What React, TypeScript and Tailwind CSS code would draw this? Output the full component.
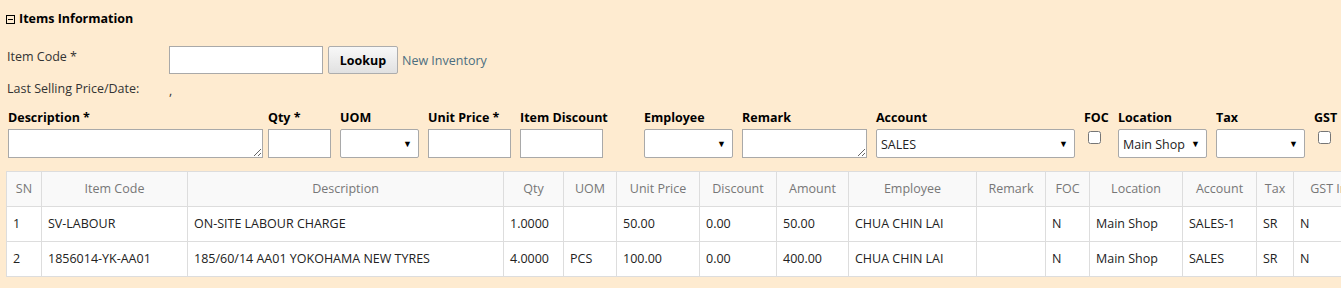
import React from "react";

const font = { fontFamily: '"Open Sans", "Noto Sans", sans-serif' };

function FakeSelect({ value = "", className = "" }: { value?: string; className?: string }) {
  return (
    <div
      className={`h-[29px] flex items-center justify-between bg-white border border-[#a9a9a9] rounded-[2px] pl-[4px] pr-[6px] text-[12.5px] text-[#222] ${className}`}
    >
      <span className="whitespace-nowrap pt-[4px]">{value}</span>
      <span className="text-[9px] text-black">▼</span>
    </div>
  );
}

function TextBox({ className = "" }: { className?: string }) {
  return <div className={`h-[29px] bg-white border border-[#a9a9a9] ${className}`} />;
}

function TextArea({ className = "" }: { className?: string }) {
  return (
    <textarea
      readOnly
      className={`h-[29px] block bg-white border border-[#a9a9a9] resize ${className}`}
    />
  );
}

const fields = [
  { label: "Description *", w: "w-[255px]", mr: "mr-[5px]", kind: "area" },
  { label: "Qty *", w: "w-[63px]", mr: "mr-[9px]", kind: "text" },
  { label: "UOM", w: "w-[79px]", mr: "mr-[9px]", kind: "select" },
  { label: "Unit Price *", w: "w-[83px]", mr: "mr-[9px]", kind: "text" },
  { label: "Item Discount", w: "w-[83px]", mr: "mr-[41px]", kind: "text" },
  { label: "Employee", w: "w-[89px]", mr: "mr-[9px]", kind: "select" },
  { label: "Remark", w: "w-[125px]", mr: "mr-[9px]", kind: "area" },
  { label: "Account", w: "w-[199px]", mr: "mr-[9px]", kind: "select", value: "SALES" },
  { label: "FOC", w: "w-[34px]", mr: "", kind: "check" },
  { label: "Location", w: "w-[89px]", mr: "mr-[9px]", kind: "select", value: "Main Shop" },
  { label: "Tax", w: "w-[89px]", mr: "mr-[9px]", kind: "select" },
  { label: "GST", w: "w-[34px]", mr: "", kind: "check" },
];

const columns = [
  { name: "SN", w: "w-[35px]" },
  { name: "Item Code", w: "w-[146px]" },
  { name: "Description", w: "w-[316px]" },
  { name: "Qty", w: "w-[60px]" },
  { name: "UOM", w: "w-[53px]" },
  { name: "Unit Price", w: "w-[83px]" },
  { name: "Discount", w: "w-[77px]" },
  { name: "Amount", w: "w-[72px]" },
  { name: "Employee", w: "w-[128px]" },
  { name: "Remark", w: "w-[69px]" },
  { name: "FOC", w: "w-[44px]" },
  { name: "Location", w: "w-[93px]" },
  { name: "Account", w: "w-[74px]" },
  { name: "Tax", w: "w-[37px]" },
  { name: "GST Inclusive", w: "w-[110px]" },
];

const rows = [
  ["1", "SV-LABOUR", "ON-SITE LABOUR CHARGE", "1.0000", "", "50.00", "0.00", "50.00", "CHUA CHIN LAI", "", "N", "Main Shop", "SALES-1", "SR", "N"],
  ["2", "1856014-YK-AA01", "185/60/14 AA01 YOKOHAMA NEW TYRES", "4.0000", "PCS", "100.00", "0.00", "400.00", "CHUA CHIN LAI", "", "N", "Main Shop", "SALES", "SR", "N"],
];

export default function App() {
  return (
    <div style={font} className="w-[1341px] h-[288px] overflow-hidden bg-[#feebd0] text-[12.5px] text-[#333]">
      <div className="flex items-center h-[17px] mt-[11px] pl-[6px]">
        <span className="w-[9px] h-[9px] border border-black flex items-center justify-center mr-[4px]">
          <span className="w-[5px] h-[1px] bg-black" />
        </span>
        <span className="font-bold text-[12.5px] text-black">Items Information</span>
      </div>

      <div className="flex items-center mt-[18px] pl-[7px] h-[28px]">
        <span className="w-[162px] self-start mt-[2px]">Item Code *</span>
        <div className="w-[154px] h-[28px] bg-white border border-[#a9a9a9]" />
        <button className="ml-[5px] w-[70px] h-[28px] pt-[3px] border border-[#adadad] rounded-[2px] bg-gradient-to-b from-[#f8f8f8] to-[#e1e1e1] font-bold text-[12.5px] text-black">
          Lookup
        </button>
        <span className="ml-[4px] mt-[3px] text-[#4c6e80]">New Inventory</span>
      </div>

      <div className="flex items-center pl-[7px] mt-[6px] h-[18px]">
        <span className="w-[162px]">Last Selling Price/Date:</span>
        <span className="mt-[4px]">,</span>
      </div>

      <div className="flex pl-[8px] mt-[11px]">
        {fields.map((f) => (
          <div key={f.label} className={`flex flex-col shrink-0 ${f.w} ${f.mr}`}>
            <span className="font-bold text-black h-[20px] whitespace-nowrap">{f.label}</span>
            {f.kind === "area" && <TextArea className="w-full" />}
            {f.kind === "text" && <TextBox className="w-full" />}
            {f.kind === "select" && <FakeSelect className="w-full" value={f.value} />}
            {f.kind === "check" && (
              <input type="checkbox" readOnly className="ml-[4px] mt-[2px] w-[13px] h-[13px]" />
            )}
          </div>
        ))}
      </div>

      <div className="ml-[6px] mt-[13px] w-[1400px]">
        <table className="border-collapse border border-[#dddddd] text-[13px]">
          <thead>
            <tr className="bg-[#f9f9f9] h-[35px]">
              {columns.map((c) => (
                <th key={c.name} className={`${c.w} border border-[#dddddd] font-normal text-[12.5px] text-[#777] text-center px-[6px] whitespace-nowrap overflow-hidden`}>
                  {c.name}
                </th>
              ))}
            </tr>
          </thead>
          <tbody>
            {rows.map((r) => (
              <tr key={r[0]} className="bg-white h-[35px]">
                {r.map((v, i) => (
                  <td key={i} className="border border-[#dddddd] px-[6px] text-[#222] text-[12.5px] whitespace-nowrap">
                    {v}
                  </td>
                ))}
              </tr>
            ))}
          </tbody>
        </table>
      </div>
    </div>
  );
}
